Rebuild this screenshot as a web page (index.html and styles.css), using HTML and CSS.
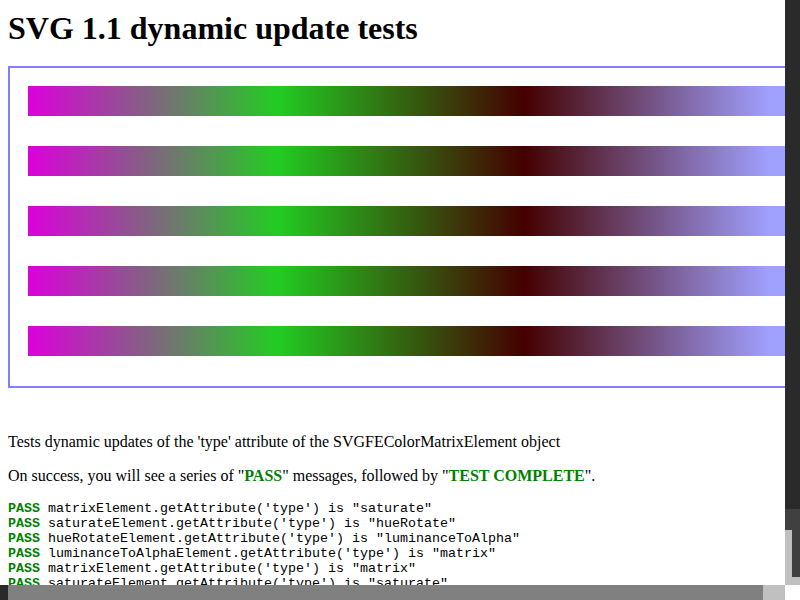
FILE: index.html
```html
<!DOCTYPE html>
<html>
<head>
<meta charset="utf-8">
<link rel="stylesheet" href="styles.css">
</head>
<body>
<h1 class="title">SVG 1.1 dynamic update tests</h1>
<div class="frame">
  <div class="bar"></div>
  <div class="bar"></div>
  <div class="bar"></div>
  <div class="bar"></div>
  <div class="bar"></div>
</div>
<p class="desc">Tests dynamic updates of the 'type' attribute of the SVGFEColorMatrixElement object</p>
<p class="desc">On success, you will see a series of "<span class="pass">PASS</span>" messages, followed by "<span class="pass">TEST COMPLETE</span>".</p>
<div class="console">
  <div class="line"><span class="pass">PASS</span> matrixElement.getAttribute('type') is "saturate"</div>
  <div class="line"><span class="pass">PASS</span> saturateElement.getAttribute('type') is "hueRotate"</div>
  <div class="line"><span class="pass">PASS</span> hueRotateElement.getAttribute('type') is "luminanceToAlpha"</div>
  <div class="line"><span class="pass">PASS</span> luminanceToAlphaElement.getAttribute('type') is "matrix"</div>
  <div class="line"><span class="pass">PASS</span> matrixElement.getAttribute('type') is "matrix"</div>
  <div class="line"><span class="pass">PASS</span> saturateElement.getAttribute('type') is "saturate"</div>
</div>
<div class="vscroll">
  <div class="vs-thumb"></div>
  <div class="vs-btn"></div>
  <div class="vs-arrow"><div class="vs-light"></div><div class="vs-dark"></div></div>
  <div class="vs-end"></div>
</div>
<div class="hscroll">
  <div class="hs-left"></div>
  <div class="hs-thumb"></div>
  <div class="hs-end"></div>
  <div class="corner"></div>
</div>
</body>
</html>
```
FILE: styles.css
```css
html {
  overflow: hidden;
  background: #fff;
}
body {
  margin: 8px;
  font-family: "Liberation Serif", serif;
  font-size: 16px;
  color: #000;
  width: 900px;
}
.title {
  font-size: 32px;
  font-weight: bold;
  margin: 2px 0 20px;
  line-height: 36px;
}
.frame {
  border: 2px solid #8080ff;
  width: 850px;
  box-sizing: border-box;
  padding: 18px 0 30px 18px;
  display: flex;
  flex-direction: column;
  gap: 30px;
}
.bar {
  width: 790px;
  height: 30px;
  background: linear-gradient(to right, #dc00dc 0px, #22cc22 249px, #440000 496px, #a0a0ff 742px, #a0a0ff 790px);
}
.desc {
  margin: 45px 0 16px;
  line-height: 18px;
}
.desc + .desc {
  margin-top: 16px;
}
.pass {
  color: #008000;
  font-weight: bold;
}
.console {
  font-family: "Liberation Mono", monospace;
  font-size: 13.33px;
  line-height: 15px;
}
.line {
  white-space: pre;
  height: 15px;
}
.vscroll {
  position: fixed;
  top: 0;
  right: 0;
  width: 15px;
  height: 585px;
  display: flex;
  flex-direction: column;
}
.vs-thumb {
  height: 509px;
  background: #2a2a2a;
}
.vs-btn {
  height: 21px;
  background: #404040;
}
.vs-arrow {
  height: 47px;
  display: flex;
}
.vs-light {
  width: 7px;
  background: #c0c0c0;
}
.vs-dark {
  flex: 1;
  background: #404040;
}
.vs-end {
  height: 8px;
  background: #c0c0c0;
}
.hscroll {
  position: fixed;
  left: 0;
  bottom: 0;
  width: 800px;
  height: 15px;
  display: flex;
}
.hs-left {
  width: 8px;
  background: #2a2a2a;
}
.hs-thumb {
  width: 755px;
  background: #808080;
}
.hs-end {
  width: 22px;
  background: #c0c0c0;
}
.corner {
  width: 15px;
  background: #fff;
}
```
